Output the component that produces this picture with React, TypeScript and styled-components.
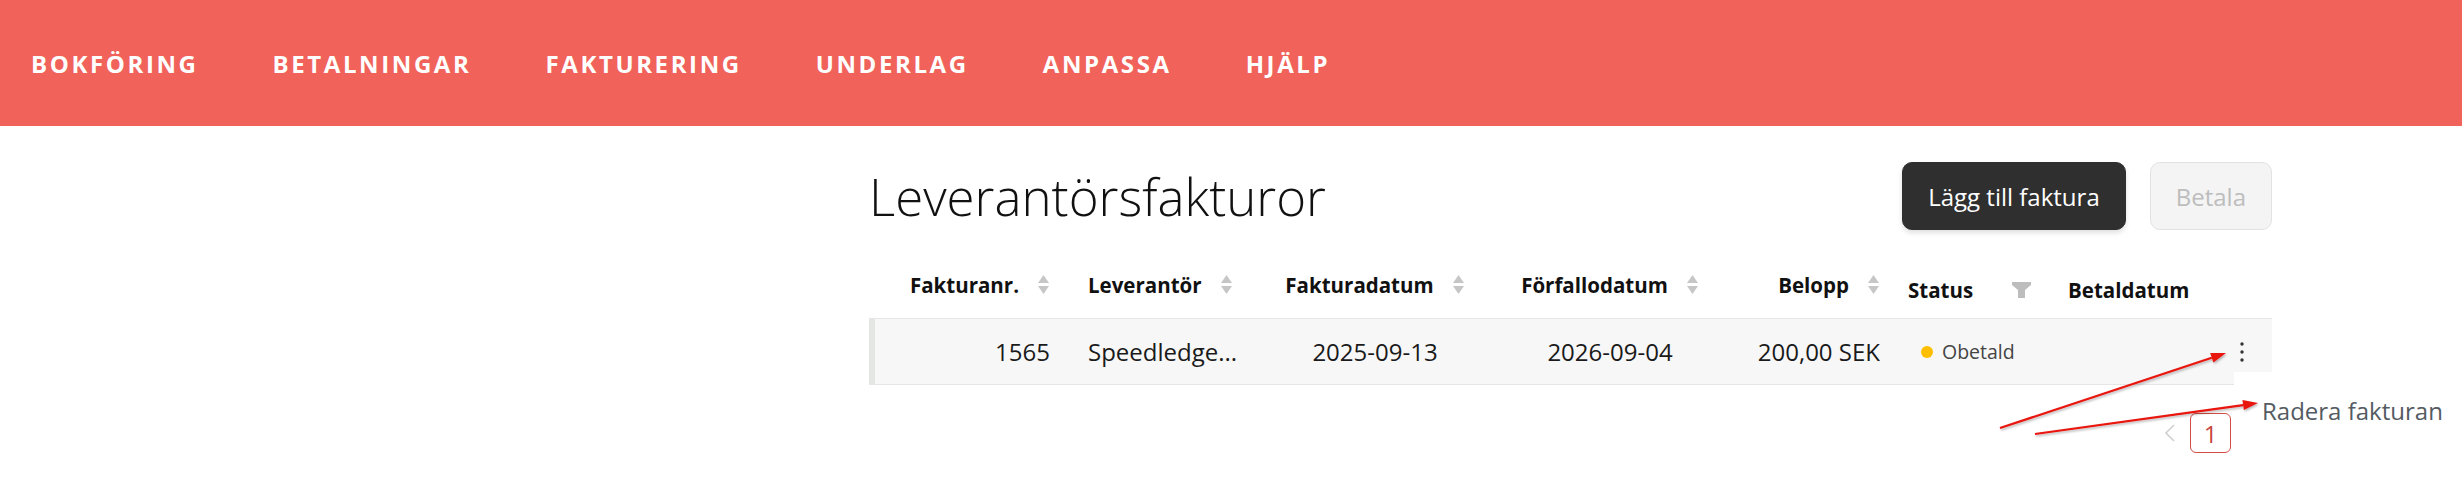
import React from 'react'
import styled, { createGlobalStyle } from 'styled-components'

const GlobalStyle = createGlobalStyle`
  html, body {
    margin: 0;
    padding: 0;
    background: #fff;
    overflow: hidden;
  }
  body {
    font-family: 'Open Sans', 'Noto Sans', sans-serif;
    color: #1a1a1a;
  }
  * {
    box-sizing: border-box;
  }
`

// marker, nr, supplier, invoice date, due date, amount, status, paid date, actions
const COLUMNS = '6px 191px 203px 212px 258px 157px 156px 159px 61px'

const Page = styled.div`
  position: relative;
  width: 2462px;
  height: 496px;
`

const TopBar = styled.header`
  height: 126px;
  background: #f0625a;
  display: flex;
  align-items: center;
  gap: 74px;
  padding-left: 31px;
`

const NavItem = styled.a`
  color: #fff;
  font-size: 24px;
  font-weight: 700;
  letter-spacing: 2.6px;
  text-transform: uppercase;
  text-decoration: none;
  white-space: nowrap;
`

const Layout = styled.div`
  display: grid;
  grid-template-columns: 869px 1403px;
`

const Sidebar = styled.aside``

const Content = styled.main`
  padding-top: 36px;
`

const TitleRow = styled.div`
  display: flex;
  align-items: center;
  justify-content: space-between;
  height: 68px;
`

const Title = styled.h1`
  margin: 0;
  font-size: 51px;
  line-height: 51px;
  font-weight: 300;
  color: #111;
`

const Actions = styled.div`
  display: flex;
  gap: 24px;
`

const Button = styled.button<{ $primary?: boolean }>`
  height: 68px;
  padding: 0 25px;
  border-radius: 10px;
  font-family: inherit;
  font-size: 24px;
  border: 1px solid ${p => (p.$primary ? '#2f2f2f' : '#e2e2e2')};
  background: ${p => (p.$primary ? '#2f2f2f' : '#f4f4f4')};
  color: ${p => (p.$primary ? '#fff' : '#bdbdbd')};
  box-shadow: ${p => (p.$primary ? '0 3px 5px rgba(0, 0, 0, 0.12)' : 'none')};
`

const Table = styled.div`
  margin-top: 28px;
`

const HeadRow = styled.div`
  display: grid;
  grid-template-columns: ${COLUMNS};
  align-items: center;
  height: 60px;
  padding-bottom: 7px;
`

type Align = 'left' | 'center' | 'right'

const justify = (align?: Align) =>
  align === 'right' ? 'flex-end' : align === 'center' ? 'center' : 'flex-start'

const HeadCell = styled.div<{ $align?: Align; $drop?: boolean; $inset?: number }>`
  display: flex;
  align-items: center;
  justify-content: ${p => justify(p.$align)};
  gap: 18px;
  padding: ${p => (p.$drop ? '10px' : '0')} 16px 0 ${p => p.$inset ?? 16}px;
  font-size: 20.5px;
  font-weight: 700;
  color: #111;
  white-space: nowrap;
`

const StatusHead = styled(HeadCell)`
  gap: 39px;
`

const BodyRow = styled.div`
  display: grid;
  grid-template-columns: ${COLUMNS};
  height: 67px;
  background: #f7f7f7;
  border-top: 1px solid #e6e6e6;
  border-bottom: 1px solid #e6e6e6;
`

const RowMarker = styled.div`
  background: #e2e7e4;
`

const Cell = styled.div<{ $align?: Align; $inset?: number }>`
  position: relative;
  display: flex;
  align-items: center;
  justify-content: ${p => justify(p.$align)};
  padding: 0 16px 0 ${p => p.$inset ?? 16}px;
  font-size: 24px;
  white-space: nowrap;
`

const Badge = styled.span`
  display: inline-flex;
  align-items: center;
  gap: 9px;
  padding-left: 13px;
  font-size: 19.5px;
  color: #444;
`

const Dot = styled.span<{ $color: string }>`
  width: 12px;
  height: 12px;
  border-radius: 50%;
  background: ${p => p.$color};
`

const KebabButton = styled.button`
  display: flex;
  align-items: center;
  justify-content: center;
  width: 24px;
  height: 32px;
  padding: 0;
  border: none;
  background: transparent;
`

const Menu = styled.div`
  position: absolute;
  top: 53px;
  left: 23px;
  z-index: 2;
  width: 250px;
  padding: 22px 28px;
  background: #fff;
  font-size: 24px;
  color: #545b62;
  white-space: nowrap;
`

const Pager = styled.div`
  display: flex;
  justify-content: flex-end;
  align-items: center;
  gap: 7px;
  margin-top: 28px;
  padding-right: 7px;
`

const PagerArrow = styled.span`
  display: flex;
  justify-content: center;
  width: 27px;
`

const PageNumber = styled.span<{ $active?: boolean }>`
  display: flex;
  align-items: center;
  justify-content: center;
  width: 41px;
  height: 40px;
  border: 1px solid ${p => (p.$active ? '#d44c44' : 'transparent')};
  border-radius: 6px;
  color: #c9453d;
  font-size: 24px;
`

const Annotations = styled.svg`
  position: absolute;
  top: 0;
  left: 0;
  pointer-events: none;
  z-index: 5;
`

const SortIcon = () => (
  <svg width="13" height="21" viewBox="0 0 13 21">
    <path d="M6.5 1 L12 9 H1 Z" fill="#c6c6c6" />
    <path d="M1 12 H12 L6.5 20 Z" fill="#c6c6c6" />
  </svg>
)

const FilterIcon = () => (
  <svg width="19" height="16" viewBox="0 0 19 16">
    <path d="M0 0 H19 V3 L13 8 V16 H6 V8 L0 3 Z" fill="#bdbdbd" />
  </svg>
)

const Kebab = () => (
  <svg width="6" height="22" viewBox="0 0 6 22">
    <circle cx="3" cy="3" r="1.7" fill="#333" />
    <circle cx="3" cy="11" r="1.7" fill="#333" />
    <circle cx="3" cy="19" r="1.7" fill="#333" />
  </svg>
)

const Chevron = ({ dir }: { dir: 'left' | 'right' }) => (
  <svg width="13" height="18" viewBox="0 0 13 18">
    <path
      d={dir === 'left' ? 'M11 1 L3 9 L11 17' : 'M2 1 L10 9 L2 17'}
      fill="none"
      stroke="#cfcfcf"
      strokeWidth="1.6"
    />
  </svg>
)

const Arrow = ({ x1, y1, x2, y2 }: { x1: number; y1: number; x2: number; y2: number }) => {
  const angle = Math.atan2(y2 - y1, x2 - x1)
  const len = 15
  const half = 5
  const bx = x2 - len * Math.cos(angle)
  const by = y2 - len * Math.sin(angle)
  const px = -Math.sin(angle) * half
  const py = Math.cos(angle) * half
  return (
    <g filter="url(#arrow-shadow)">
      <line x1={x1} y1={y1} x2={bx} y2={by} stroke="#e8140f" strokeWidth="2.2" />
      <polygon
        points={`${x2},${y2} ${bx + px},${by + py} ${bx - px},${by - py}`}
        fill="#e8140f"
      />
    </g>
  )
}

const navItems = ['Bokföring', 'Betalningar', 'Fakturering', 'Underlag', 'Anpassa', 'Hjälp']

const App = (): JSX.Element => (
  <Page>
    <GlobalStyle />
    <TopBar>
      {navItems.map(item => (
        <NavItem key={item} href="#">
          {item}
        </NavItem>
      ))}
    </TopBar>

    <Layout>
      <Sidebar />
      <Content>
        <TitleRow>
          <Title>Leverantörsfakturor</Title>
          <Actions>
            <Button $primary>Lägg till faktura</Button>
            <Button disabled>Betala</Button>
          </Actions>
        </TitleRow>

        <Table>
          <HeadRow>
            <div />
            <HeadCell $align="right">
              Fakturanr. <SortIcon />
            </HeadCell>
            <HeadCell $inset={22}>
              Leverantör <SortIcon />
            </HeadCell>
            <HeadCell $align="center">
              Fakturadatum <SortIcon />
            </HeadCell>
            <HeadCell $align="center">
              Förfallodatum <SortIcon />
            </HeadCell>
            <HeadCell $align="right">
              Belopp <SortIcon />
            </HeadCell>
            <StatusHead $drop $inset={12}>
              Status <FilterIcon />
            </StatusHead>
            <HeadCell $drop>Betaldatum</HeadCell>
            <div />
          </HeadRow>

          <BodyRow>
            <RowMarker />
            <Cell $align="right">1565</Cell>
            <Cell $inset={22}>Speedledge...</Cell>
            <Cell $align="center">2025-09-13</Cell>
            <Cell $align="center">2026-09-04</Cell>
            <Cell $align="right">200,00 SEK</Cell>
            <Cell $inset={12}>
              <Badge>
                <Dot $color="#ffbf00" />
                Obetald
              </Badge>
            </Cell>
            <Cell />
            <Cell $align="center">
              <KebabButton aria-label="Fler val">
                <Kebab />
              </KebabButton>
              <Menu>Radera fakturan</Menu>
            </Cell>
          </BodyRow>
        </Table>

        <Pager>
          <PagerArrow>
            <Chevron dir="left" />
          </PagerArrow>
          <PageNumber $active>1</PageNumber>
          <PagerArrow>
            <Chevron dir="right" />
          </PagerArrow>
        </Pager>
      </Content>
    </Layout>

    <Annotations width="2462" height="496" viewBox="0 0 2462 496">
      <defs>
        <filter id="arrow-shadow" x="-10%" y="-10%" width="120%" height="140%">
          <feDropShadow dx="1" dy="1.5" stdDeviation="1" floodColor="#000" floodOpacity="0.3" />
        </filter>
      </defs>
      <Arrow x1={2000} y1={428} x2={2226} y2={353} />
      <Arrow x1={2035} y1={434} x2={2258} y2={403} />
    </Annotations>
  </Page>
)

export default App
